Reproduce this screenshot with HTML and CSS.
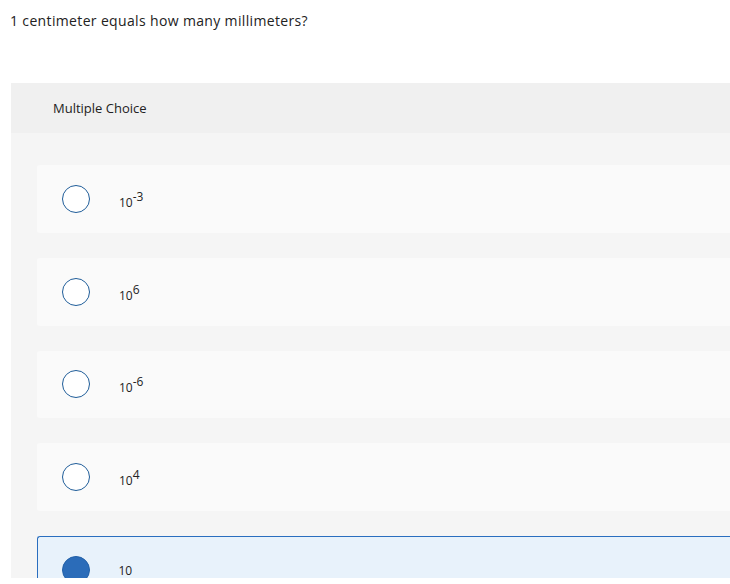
FILE: index.html
```html
<!DOCTYPE html>
<html>
<head>
<meta charset="utf-8">
<link rel="stylesheet" href="styles.css">
</head>
<body>
<p class="question">1 centimeter equals how many millimeters?</p>
<section class="panel">
  <div class="panel-head">Multiple Choice</div>
  <div class="options">
    <div class="option"><span class="radio"></span><span class="label">10<sup>-3</sup></span></div>
    <div class="option"><span class="radio"></span><span class="label">10<sup>6</sup></span></div>
    <div class="option"><span class="radio"></span><span class="label">10<sup>-6</sup></span></div>
    <div class="option"><span class="radio"></span><span class="label">10<sup>4</sup></span></div>
    <div class="option selected"><span class="radio"></span><span class="label">10</span></div>
  </div>
</section>
</body>
</html>
```
FILE: styles.css
```css
html { overflow: hidden; background: #fff; }
body {
  margin: 0;
  height: 578px;
  overflow: hidden;
  font-family: "Open Sans", "Liberation Sans", sans-serif;
  color: #222;
  background: #fff;
}
.question {
  margin: 0;
  padding: 11px 0 0 10px;
  font-size: 14px;
  letter-spacing: 0.35px;
  line-height: 20px;
  height: 83px;
  box-sizing: border-box;
}
.panel {
  margin-left: 11px;
  background: #f5f5f5;
}
.panel-head {
  height: 50px;
  background: #f0f0f0;
  display: flex;
  align-items: center;
  padding-left: 42px;
  font-size: 13px;
  color: #222;
}
.options {
  display: flex;
  flex-direction: column;
  gap: 25px;
  padding: 32px 0 40px 26px;
}
.option {
  height: 67.75px;
  box-sizing: border-box;
  background: #fafafa;
  border-radius: 3px 0 0 3px;
  display: flex;
  align-items: center;
  padding-left: 25px;
}
.radio {
  width: 28px;
  height: 28px;
  box-sizing: border-box;
  border: 1.5px solid #1f5d99;
  border-radius: 50%;
  background: #fff;
  flex: none;
}
.label {
  margin-left: 29px;
  font-size: 12px;
  line-height: 16px;
  padding-top: 8px;
  color: #222;
}
.label sup {
  font-size: 12px;
  vertical-align: 6px;
  line-height: 0;
}
.option.selected {
  background: #e8f2fb;
  border: 1.5px solid #2a6ebf;
  border-right: none;
  padding-left: 23.5px;
}
.option.selected .label {
  padding-top: 2px;
}
.option.selected .radio {
  background: #2b6cb9;
  border-color: #2160a8;
}
```
